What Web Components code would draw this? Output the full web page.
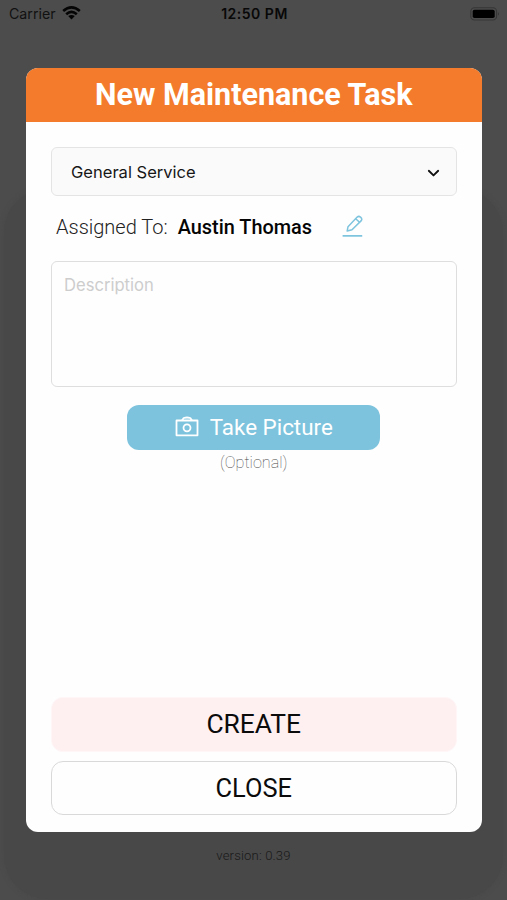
<!DOCTYPE html>
<html lang="en">
<head>
<meta charset="utf-8">
<title>New Maintenance Task</title>
<style>
html, body { margin: 0; height: 100%; }
body { background: #4c4c4c; font-family: Roboto, "Liberation Sans", sans-serif; color: #0b0b0b; overflow: hidden; }
</style>
</head>
<body>
<app-screen>
  <status-bar slot="status" carrier="Carrier" time="12:50 PM"></status-bar>
  <task-dialog>
    <span slot="title">New Maintenance Task</span>
    <select-field>General Service</select-field>
    <assignee-row name="Austin Thomas">Assigned To:</assignee-row>
    <text-area>Description</text-area>
    <picture-button note="(Optional)">Take Picture</picture-button>
    <dialog-button slot="actions" class="primary">CREATE</dialog-button>
    <dialog-button slot="actions" class="secondary">CLOSE</dialog-button>
  </task-dialog>
  <span slot="footer">version: 0.39</span>
</app-screen>
<script>
const define = (name, markup) => customElements.define(name, class extends HTMLElement {
  constructor() {
    super();
    this.attachShadow({ mode: 'open' }).innerHTML = markup;
  }
  connectedCallback() {
    this.shadowRoot.querySelectorAll('[data-attr]').forEach(el => {
      el.textContent = this.getAttribute(el.dataset.attr);
    });
  }
});

define('app-screen', `
<style>
:host { display: flex; flex-direction: column; position: relative; width: 507px; height: 900px; box-sizing: border-box; overflow: hidden; }
.panel { position: absolute; inset: 189px 4px 1px 4px; border-radius: 44px; background: #484848; box-shadow: 0 0 5px #484848; }
.modal { padding: 40px 25.5px 0 26px; position: relative; }
footer { position: relative; text-align: center; font-size: 13.1px; letter-spacing: .15px; line-height: 16px; margin-top: 16px; color: #191919; font-weight: 300; }
</style>
<div class="panel"></div>
<slot name="status"></slot>
<div class="modal"><slot></slot></div>
<footer><slot name="footer"></slot></footer>`);

define('status-bar', `
<style>
:host { display: grid; grid-template-columns: 1fr auto 1fr; align-items: center; height: 28px; padding: 0 7px 0 9px; font: 14.2px/28px Inter, sans-serif; color: #111; position: relative; box-sizing: border-box; }
.left { display: flex; align-items: center; gap: 6px; }
.left svg { margin-top: -2px; }
.time { font-weight: 600; font-size: 14px; letter-spacing: .5px; color: #080808; }
.battery { justify-self: end; margin-top: -1px; }
svg { display: block; }
</style>
<div class="left"><span data-attr="carrier"></span>
<svg width="19" height="14" viewBox="0 0 19 14" fill="none" stroke="#050505" stroke-width="2.6"><path d="M1.2 5.1Q9.5-2.2 17.8 5.1M4.2 8.2Q9.5 3.6 14.8 8.2"/><path d="M6.2 10.1Q9.5 7.7 12.8 10.1L9.5 13.4Z" fill="#050505" stroke="none"/></svg></div>
<span class="time" data-attr="time"></span>
<svg class="battery" width="30" height="14" viewBox="0 0 30 14"><rect x=".8" y=".8" width="25.8" height="12.2" rx="3.7" fill="none" stroke="#363636" stroke-width="1.1"/><rect x="2.7" y="2.7" width="22" height="8.4" rx="1.8" fill="#000"/><path d="M28 5Q29.7 6.9 28 8.8Z" fill="#303030"/></svg>`);

define('task-dialog', `
<style>
:host { display: flex; flex-direction: column; height: 764px; border-radius: 12px; background: #fefefe; overflow: hidden; }
header { height: 54px; background: #f37b2b; color: #fff; text-align: center; font-size: 30.5px; line-height: 54px; font-weight: 700; }
main { flex: 1; padding: 25px 25px 0; display: flex; flex-direction: column; }
.actions { display: flex; flex-direction: column; gap: 9px; padding: 0 25px 17px; }
</style>
<header><slot name="title"></slot></header>
<main><slot></slot></main>
<div class="actions"><slot name="actions"></slot></div>`);

define('select-field', `
<style>
:host { display: flex; align-items: center; justify-content: space-between; height: 49px; box-sizing: border-box; border: 1.4px solid #e4e4e4; border-radius: 6px; background: #fafafa; padding: 0 16px 0 19px; font: 16.55px/46px Inter, sans-serif; color: #171717; }
svg { margin-top: 4px; }
</style>
<span><slot></slot></span>
<svg width="13" height="9" viewBox="0 0 13 9" fill="none" stroke="#111" stroke-width="1.9" stroke-linecap="round" stroke-linejoin="round"><path d="M1.8 1.8L6.5 6.4L11.2 1.8"/></svg>`);

define('assignee-row', `
<style>
:host { display: flex; align-items: center; height: 65px; padding: 0 0 3px 5px; box-sizing: border-box; font-size: 20px; }
.label { font-weight: 300; color: #222; }
b { font-weight: 500; font-size: 19.9px; color: #050505; margin-left: 10px; }
svg { margin: -3px 0 0 30px; }
</style>
<span class="label"><slot></slot></span><b data-attr="name"></b>
<svg width="21" height="22" viewBox="0 0 21 22" fill="none" stroke="#7fc4de" stroke-width="1.5" stroke-linejoin="round"><path d="M5.2 16L6 11.7L15.2 2.1Q16.8.7 18.5 2.1Q20.5 3.8 19.3 5.6L10 14.8Z"/><path d="M13.7 3.8L17.7 7.4"/><path d="M.6 20.8H20.2" stroke-width="1.8"/></svg>`);

define('text-area', `
<style>
:host { display: block; height: 126px; box-sizing: border-box; border: 1.4px solid #dedede; border-radius: 6px; padding: 11.5px 12px; font: 16.6px/22px Inter, sans-serif; color: #cdcdcd; }
</style>
<slot></slot>`);

define('picture-button', `
<style>
:host { display: flex; flex-direction: column; align-items: center; margin-top: 18px; }
.button { width: 253px; height: 45px; border-radius: 12px; background: #7dc3dd; color: #fff; display: flex; align-items: center; justify-content: center; gap: 11px; font-size: 22.4px; line-height: 45px; }
.note { font-size: 16.2px; line-height: 20px; margin-top: 3px; font-weight: 100; color: #444; }
svg { margin-top: -3px; }
</style>
<div class="button"><svg width="24" height="21" viewBox="0 0 24 21" fill="none" stroke="#fff" stroke-width="1.8"><path d="M1.5 4.5H22.5V19.3H1.5Z" stroke-linejoin="round"/><path d="M7 4.5L8.7 2Q12 1 15.3 2L17 4.5" stroke-linejoin="round"/><circle cx="12" cy="11.8" r="3.5"/></svg><span><slot></slot></span></div>
<span class="note" data-attr="note"></span>`);

define('dialog-button', `
<style>
:host { display: block; height: 54.5px; border: 1.3px solid #d9d9d9; border-radius: 12px; box-sizing: border-box; text-align: center; font-size: 25.4px; line-height: 52px; color: #0b0b0b; }
:host(.primary) { background: #feeff1; border-color: #fff6f7; font-size: 26.4px; }
</style>
<slot></slot>`);
</script>
</body>
</html>
